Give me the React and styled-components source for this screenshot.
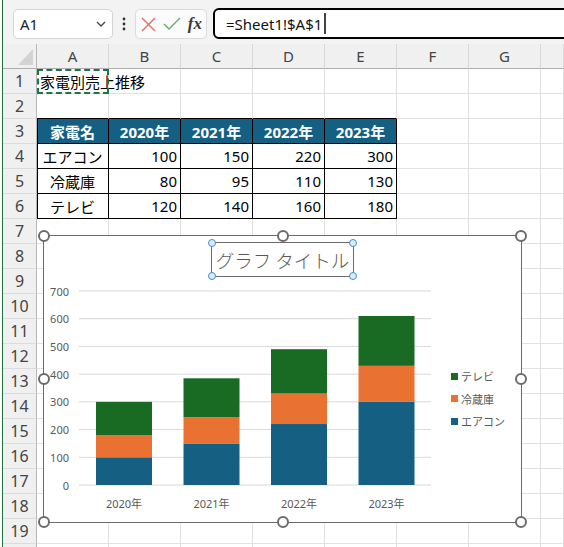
import React from 'react';
import styled, { createGlobalStyle } from 'styled-components';

const Global = createGlobalStyle`
  html, body { margin: 0; padding: 0; background: #fff; }
  body { font-family: "Noto Sans", "Noto Sans CJK JP", sans-serif; overflow: hidden; }
  * { box-sizing: border-box; }
`;

const Page = styled.div`
  width: 562px;
  height: 547px;
  margin-left: 2px;
  border-left: 1px solid #1e6e3e;
  overflow: hidden;
  background: #f3f3f3;
`;

const Toolbar = styled.div`
  height: 44px;
  display: flex;
  align-items: flex-start;
  padding: 8px 0 0 10px;
  background: #f3f3f3;
`;

const NameBox = styled.div`
  margin-top: 1px;
  width: 100px;
  height: 30px;
  background: #fff;
  border: 1px solid #d4d4d4;
  border-radius: 5px;
  display: flex;
  align-items: center;
  justify-content: space-between;
  padding: 0 6px 0 6px;
  font-size: 15px;
  color: #222;
`;

const Dots = styled.div`
  width: 22px;
  height: 31px;
  display: flex;
  align-items: center;
  justify-content: center;
`;

const FxBox = styled.div`
  margin-top: 1px;
  width: 72px;
  height: 30px;
  background: #fbfbfb;
  border: 1px solid #dcdcdc;
  border-radius: 5px;
  display: flex;
  align-items: center;
  justify-content: space-between;
  padding: 0 4px 0 5px;
`;

const Fx = styled.span`
  font-family: "Liberation Serif", "DejaVu Serif", serif;
  font-style: italic;
  font-weight: bold;
  font-size: 17px;
  color: #3a3a3a;
  line-height: 1;
  margin-bottom: 2px;
`;

const Formula = styled.div`
  flex: 1;
  height: 31px;
  margin-left: 6px;
  margin-right: -8px;
  border: 2px solid #000;
  border-radius: 6px 0 0 6px;
  background: #fff;
  display: flex;
  align-items: center;
  padding-left: 11px;
  font-size: 15px;
  color: #111;
`;

const Caret = styled.span`
  width: 2px;
  height: 21px;
  background: #444;
  margin-left: 2px;
`;

const Sheet = styled.div`
  position: relative;
  display: grid;
  grid-template-columns: 34px repeat(7, 72px) 1fr;
  grid-auto-rows: 25px;
  background: #fff;
`;

const Corner = styled.div`
  background: #f0f0f0;
  border-right: 1px solid #b8b8b8;
  border-bottom: 1px solid #adadad;
  display: flex;
  align-items: flex-end;
  justify-content: flex-end;
  padding: 0 3px 3px 0;
`;

const Tri = styled.div`
  width: 15px;
  height: 16px;
  background: #d3d3d3;
  clip-path: polygon(100% 0, 100% 100%, 0 100%);
`;

const ColHead = styled.div`
  background: #f0f0f0;
  border-right: 1px solid #d8d8d8;
  border-bottom: 1px solid #adadad;
  display: flex;
  align-items: center;
  justify-content: center;
  font-size: 15px;
  color: #444;
`;

const RowHead = styled.div`
  background: #f0f0f0;
  border-right: 1px solid #b8b8b8;
  border-bottom: 1px solid #dcdcdc;
  display: flex;
  align-items: center;
  justify-content: center;
  font-size: 16px;
  color: #444;
`;

const Cell = styled.div`
  position: relative;
  border-right: 1px solid ${p => (p.$tb ? '#000' : '#e1e1e1')};
  border-bottom: 1px solid ${p => (p.$tb || p.$bb ? '#000' : '#e1e1e1')};
  box-shadow: ${p => (p.$tl ? 'inset 1px 0 0 #000' : 'none')};
  background: ${p => (p.$head ? '#156082' : 'transparent')};
  color: ${p => (p.$head ? '#fff' : '#000')};
  font-weight: ${p => (p.$head ? 'bold' : 'normal')};
  font-size: 15px;
  display: flex;
  align-items: center;
  justify-content: ${p => p.$align || 'flex-start'};
  padding: 0 3px 0 3px;
  white-space: nowrap;
  overflow: visible;
  z-index: ${p => (p.$marquee ? 1 : 0)};

  ${p =>
    p.$marquee &&
    `&::after {
      content: "";
      position: absolute;
      left: 0; top: 0; right: -1px; bottom: -1px;
      border: 2px dashed #217346;
      pointer-events: none;
    }`}
`;

const Chart = styled.div`
  position: absolute;
  left: 40px;
  top: 191px;
  width: 479px;
  height: 288px;
  background: #fff;
  border: 1px solid #6b6b6b;
  display: flex;
  flex-direction: column;
  z-index: 5;
`;

const Handle = styled.div`
  position: absolute;
  width: 12px;
  height: 12px;
  border-radius: 50%;
  border: 2px solid #6b6b6b;
  background: #fff;
  left: calc(${p => p.$x}% - 6px);
  top: calc(${p => p.$y}% - 6px);
`;

const TitleBox = styled.div`
  position: relative;
  align-self: center;
  margin-top: 6px;
  width: 143px;
  height: 35px;
  border: 1px solid #6b6b6b;
  display: flex;
  align-items: center;
  justify-content: center;
  font-size: 18.5px;
  color: #595959;
  font-family: "Noto Sans CJK JP", sans-serif;
  font-weight: 300;
`;

const TitleHandle = styled.div`
  position: absolute;
  width: 8px;
  height: 8px;
  border-radius: 50%;
  border: 1.5px solid #3d8fd8;
  background: #dcecfb;
  left: calc(${p => p.$x}% - 4px);
  top: calc(${p => p.$y}% - 4px);
`;

const ChartBody = styled.div`
  flex: 1;
  display: flex;
`;

const Legend = styled.div`
  margin-left: 11px;
  padding-top: 88px;
  display: flex;
  flex-direction: column;
`;

const LegendItem = styled.div`
  height: 22.5px;
  display: flex;
  align-items: center;
  gap: 3px;
  font-size: 11px;
  color: #595959;
  font-family: "Noto Sans CJK JP", sans-serif;
`;

const Swatch = styled.span`
  width: 7px;
  height: 7px;
  background: ${p => p.$c};
`;

const BLUE = '#156082';
const ORANGE = '#E97132';
const GREEN = '#196B24';

const cols = ['A', 'B', 'C', 'D', 'E', 'F', 'G', ''];
const years = ['2020年', '2021年', '2022年', '2023年'];
const data = [
  { name: 'エアコン', v: [100, 150, 220, 300], c: BLUE },
  { name: '冷蔵庫', v: [80, 95, 110, 130], c: ORANGE },
  { name: 'テレビ', v: [120, 140, 160, 180], c: GREEN },
];

function renderRow(r) {
  const cells = [];
  for (let c = 0; c < 8; c++) {
    const key = `${r}-${c}`;
    const inTable = r >= 3 && r <= 6 && c <= 4;
    let content = null;
    let align;
    let head = false;
    if (r === 1 && c === 0) content = '家電別売上推移';
    if (r === 3 && c <= 4) {
      head = true;
      align = 'center';
      content = c === 0 ? '家電名' : years[c - 1];
    }
    if (r >= 4 && r <= 6 && c <= 4) {
      const d = data[r - 4];
      if (c === 0) {
        content = d.name;
        align = 'center';
      } else {
        content = d.v[c - 1];
        align = 'flex-end';
      }
    }
    cells.push(
      <Cell
        key={key}
        $tb={inTable}
        $tl={inTable && c === 0}
        $bb={r === 2 && c <= 4}
        $head={head}
        $align={align}
        $marquee={r === 1 && c === 0}
      >
        {content}
      </Cell>
    );
  }
  return cells;
}

const Y0 = 208;
const K = 0.27714;
const centers = [80, 167.5, 255, 342.5];

function Plot() {
  const ticks = [0, 100, 200, 300, 400, 500, 600, 700];
  return (
    <svg width="396" height="244" style={{ fontFamily: '"Noto Sans", "Noto Sans CJK JP", sans-serif', flexShrink: 0 }}>
      {ticks.map(t => {
        const y = Y0 - t * K;
        return (
          <g key={t}>
            <line x1="35" x2="387" y1={y} y2={y} stroke="#d9d9d9" strokeWidth="1" />
            <text x="25" y={y} textAnchor="end" dominantBaseline="central" fontSize="11" fill="#595959">
              {t}
            </text>
          </g>
        );
      })}
      {centers.map((cx, i) => {
        let base = 0;
        return (
          <g key={i}>
            {data.map(d => {
              const h = d.v[i] * K;
              const y = Y0 - (base + d.v[i]) * K;
              base += d.v[i];
              return <rect key={d.name} x={cx - 28} y={y} width="56" height={h} fill={d.c} />;
            })}
            <text x={cx} y="226" textAnchor="middle" dominantBaseline="central" fontSize="11" fill="#595959">
              {years[i]}
            </text>
          </g>
        );
      })}
    </svg>
  );
}

export default function App() {
  const rows = [];
  for (let r = 1; r <= 20; r++) {
    rows.push(<RowHead key={`rh${r}`}>{r <= 19 ? r : ''}</RowHead>);
    rows.push(...renderRow(r));
  }
  return (
    <>
      <Global />
      <Page>
        <Toolbar>
          <NameBox>
            <span>A1</span>
            <svg width="10" height="6" viewBox="0 0 10 6">
              <polyline points="1,1 5,5 9,1" fill="none" stroke="#444" strokeWidth="1.3" />
            </svg>
          </NameBox>
          <Dots>
            <svg width="4" height="14" viewBox="0 0 4 14">
              <circle cx="2" cy="2" r="1.4" fill="#333" />
              <circle cx="2" cy="7" r="1.4" fill="#333" />
              <circle cx="2" cy="12" r="1.4" fill="#333" />
            </svg>
          </Dots>
          <FxBox>
            <svg width="15" height="15" viewBox="0 0 15 15">
              <line x1="1" y1="1" x2="14" y2="14" stroke="#e86c68" strokeWidth="1.4" />
              <line x1="14" y1="1" x2="1" y2="14" stroke="#e86c68" strokeWidth="1.4" />
            </svg>
            <svg width="18" height="14" viewBox="0 0 18 14">
              <polyline points="1,7 6,12 17,1" fill="none" stroke="#62ae6e" strokeWidth="1.4" />
            </svg>
            <Fx>fx</Fx>
          </FxBox>
          <Formula>
            <span>=Sheet1!$A$1</span>
            <Caret />
          </Formula>
        </Toolbar>
        <Sheet>
          <Corner>
            <Tri />
          </Corner>
          {cols.map((c, i) => (
            <ColHead key={`ch${i}`}>{c}</ColHead>
          ))}
          {rows}
          <Chart>
            <TitleBox>
              グラフ タイトル
              <TitleHandle $x={0} $y={0} />
              <TitleHandle $x={100} $y={0} />
              <TitleHandle $x={0} $y={100} />
              <TitleHandle $x={100} $y={100} />
            </TitleBox>
            <ChartBody>
              <Plot />
              <Legend>
                {[...data].reverse().map(d => (
                  <LegendItem key={d.name}>
                    <Swatch $c={d.c} />
                    {d.name}
                  </LegendItem>
                ))}
              </Legend>
            </ChartBody>
            <Handle $x={0} $y={0} />
            <Handle $x={50} $y={0} />
            <Handle $x={100} $y={0} />
            <Handle $x={0} $y={50} />
            <Handle $x={100} $y={50} />
            <Handle $x={0} $y={100} />
            <Handle $x={50} $y={100} />
            <Handle $x={100} $y={100} />
          </Chart>
        </Sheet>
      </Page>
    </>
  );
}
